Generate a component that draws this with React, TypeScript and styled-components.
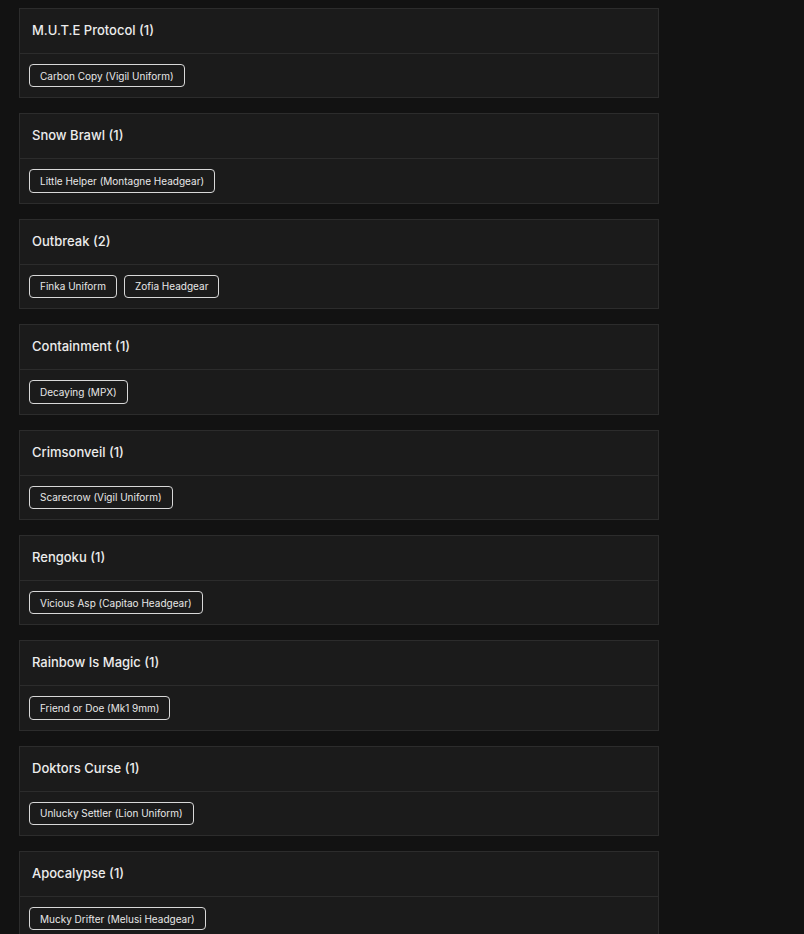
import React from "react";
import styled, { createGlobalStyle } from "styled-components";

const Global = createGlobalStyle`
  html, body { margin: 0; padding: 0; background: #121212; }
  body { font-family: Inter, "Noto Sans", sans-serif; color: #e6e6e6; }
`;

const Page = styled.div`
  padding: 8px 0 0 19px;
  width: 640px;
  display: flex;
  flex-direction: column;
  gap: 15px;
`;

const Card = styled.section`
  background: #1b1b1b;
  border: 1px solid #2c2c2c;
  display: flex;
  flex-direction: column;
`;

const Header = styled.div`
  height: 44px;
  padding: 0 12px;
  display: flex;
  align-items: center;
  border-bottom: 1px solid #2c2c2c;
  font-size: 13px;
  font-weight: 500;
  color: #ececec;
`;

const Title = styled.span`
  position: relative;
  top: -1px;
`;

const Body = styled.div`
  padding: 10px 9px;
  display: flex;
  gap: 7px;
  flex-wrap: wrap;
`;

const Tag = styled.span`
  box-sizing: border-box;
  height: 23.375px;
  padding: 0 10px;
  display: inline-flex;
  align-items: center;
  border: 1px solid #d8d8d8;
  border-radius: 4px;
  font-size: 10px;
  font-weight: 400;
  color: #e8e8e8;
`;

const data: { title: string; items: string[] }[] = [
  { title: "M.U.T.E Protocol", items: ["Carbon Copy (Vigil Uniform)"] },
  { title: "Snow Brawl", items: ["Little Helper (Montagne Headgear)"] },
  { title: "Outbreak", items: ["Finka Uniform", "Zofia Headgear"] },
  { title: "Containment", items: ["Decaying (MPX)"] },
  { title: "Crimsonveil", items: ["Scarecrow (Vigil Uniform)"] },
  { title: "Rengoku", items: ["Vicious Asp (Capitao Headgear)"] },
  { title: "Rainbow Is Magic", items: ["Friend or Doe (Mk1 9mm)"] },
  { title: "Doktors Curse", items: ["Unlucky Settler (Lion Uniform)"] },
  { title: "Apocalypse", items: ["Mucky Drifter (Melusi Headgear)"] },
];

export default function App() {
  return (
    <>
      <Global />
      <Page>
        {data.map((d) => (
          <Card key={d.title}>
            <Header>
              <Title>
                {d.title} ({d.items.length})
              </Title>
            </Header>
            <Body>
              {d.items.map((i) => (
                <Tag key={i}>{i}</Tag>
              ))}
            </Body>
          </Card>
        ))}
      </Page>
    </>
  );
}
